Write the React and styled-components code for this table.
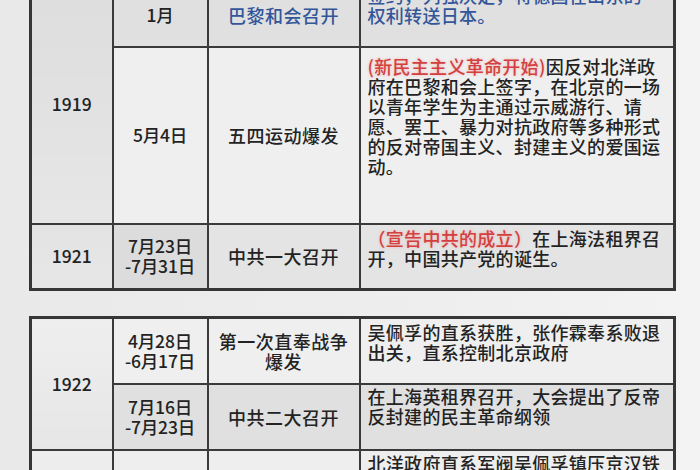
import React from 'react'
import styled, { createGlobalStyle } from 'styled-components'

const GlobalStyle = createGlobalStyle`
  html, body {
    margin: 0;
    padding: 0;
    background: #ececec;
  }
`

const rows1 = [
  {
    year: '1919',
    yearSpan: 2,
    yearBg: '#dddddd',
    date: ['1月'],
    event: ['巴黎和会召开'],
    blue: true,
    bg: '#e0e0e0',
    height: 63,
    pad: 0,
    desc: [
      ['签约，列强决定，将德国在山东的'],
      ['权利转送日本。']
    ]
  },
  {
    date: ['5月4日'],
    event: ['五四运动爆发'],
    bg: '#efefef',
    height: 177,
    pad: 8,
    desc: [
      [{ red: '(新民主主义革命开始)' }, '因反对北洋政'],
      ['府在巴黎和会上签字，在北京的一场'],
      ['以青年学生为主通过示威游行、请'],
      ['愿、罢工、暴力对抗政府等多种形式'],
      ['的反对帝国主义、封建主义的爱国运'],
      ['动。']
    ]
  },
  {
    year: '1921',
    yearBg: '#e3e3e3',
    date: ['7月23日', '-7月31日'],
    dateBg: '#dcdcdc',
    event: ['中共一大召开'],
    bg: '#e4e4e4',
    height: 66,
    pad: 3,
    desc: [
      [{ red: '（宣告中共的成立）' }, '在上海法租界召'],
      ['开，中国共产党的诞生。']
    ]
  }
]

const rows2 = [
  {
    year: '1922',
    yearSpan: 2,
    yearBg: '#eeeeee',
    date: ['4月28日', '-6月17日'],
    event: ['第一次直奉战争', '爆发'],
    bg: '#efefef',
    height: 66,
    pad: 3,
    desc: [
      ['吴佩孚的直系获胜，张作霖奉系败退'],
      ['出关，直系控制北京政府']
    ]
  },
  {
    date: ['7月16日', '-7月23日'],
    event: ['中共二大召开'],
    bg: '#e0e0e0',
    height: 66,
    pad: 1,
    desc: [
      ['在上海英租界召开，大会提出了反帝'],
      ['反封建的民主革命纲领']
    ]
  },
  {
    year: '1923',
    yearBg: '#eeeeee',
    date: ['2月7日'],
    event: ['二七惨案'],
    bg: '#eeeeee',
    height: 120,
    pad: 2,
    desc: [
      ['北洋政府直系军阀吴佩孚镇压京汉铁'],
      ['路工人大罢工，制造了二七惨案。']
    ]
  }
]

function renderLines(lines) {
  return lines.map((line, i) => (
    <React.Fragment key={i}>
      {i > 0 && <br />}
      {line}
    </React.Fragment>
  ))
}

function renderDesc(desc) {
  return desc.map((line, i) => (
    <React.Fragment key={i}>
      {i > 0 && <br />}
      {line.map((part, j) =>
        typeof part === 'string'
          ? <React.Fragment key={j}>{part}</React.Fragment>
          : <Red key={j}>{part.red}</Red>
      )}
    </React.Fragment>
  ))
}

function EventTable({ rows, $top }) {
  return (
    <Table $top={$top}>
      <colgroup>
        <col style={{ width: 82 }} />
        <col style={{ width: 95 }} />
        <col style={{ width: 152 }} />
        <col />
      </colgroup>
      <tbody>
        {rows.map((r, i) => (
          <Row key={i} $height={r.height}>
            {r.year && (
              <Year rowSpan={r.yearSpan || 1} $bg={r.yearBg}>
                {r.year}
              </Year>
            )}
            <DateCell $bg={r.dateBg || r.bg}>{renderLines(r.date)}</DateCell>
            <EventCell $bg={r.bg} $blue={r.blue}>{renderLines(r.event)}</EventCell>
            <Desc $bg={r.bg} $pad={r.pad} $blue={r.blue}>{renderDesc(r.desc)}</Desc>
          </Row>
        ))}
      </tbody>
    </Table>
  )
}

export default function App() {
  return (
    <Page>
      <GlobalStyle />
      <EventTable rows={rows1} $top={-18} />
      <EventTable rows={rows2} $top={25} />
    </Page>
  )
}

const Page = styled.div`
  width: 700px;
  height: 470px;
  overflow: hidden;
  display: flex;
  flex-direction: column;
  background: linear-gradient(90deg, #e9e9e9 0%, #eeeeee 60%, #f3f3f3 100%);
  font-family: "Noto Sans CJK SC", "Noto Sans", sans-serif;
  font-weight: 500;
  color: #232323;
`

const Table = styled.table`
  flex: none;
  margin: ${p => p.$top}px 0 0 29px;
  width: 647px;
  max-width: 647px;
  table-layout: fixed;
  border-collapse: collapse;
  border: 3px solid #363636;
  font-size: 18px;
  line-height: 20px;
`

const Row = styled.tr`
  height: ${p => p.$height}px;
`

const Cell = styled.td`
  border: 2px solid #3a3a3a;
  padding: 0;
  background: ${p => p.$bg || '#eeeeee'};
  vertical-align: middle;
  text-align: center;
`

const Year = styled(Cell)`
  font-size: 17.5px;
  background: linear-gradient(180deg, ${p => p.$bg} 0%, #e6e6e6 100%);
`

const DateCell = styled(Cell)`
  font-size: 17.5px;
  letter-spacing: -0.2px;
`

const EventCell = styled(Cell)`
  letter-spacing: 0.5px;
  color: ${p => (p.$blue ? '#33569a' : '#232323')};
`

const Desc = styled(Cell)`
  vertical-align: top;
  text-align: left;
  white-space: nowrap;
  overflow: hidden;
  padding: ${p => p.$pad}px 0 0 7px;
  letter-spacing: 0.3px;
  color: ${p => (p.$blue ? '#33569a' : '#232323')};
`

const Red = styled.span`
  color: #d2413f;
  text-shadow: 0 0 3px rgba(240, 140, 140, 0.6);
`
